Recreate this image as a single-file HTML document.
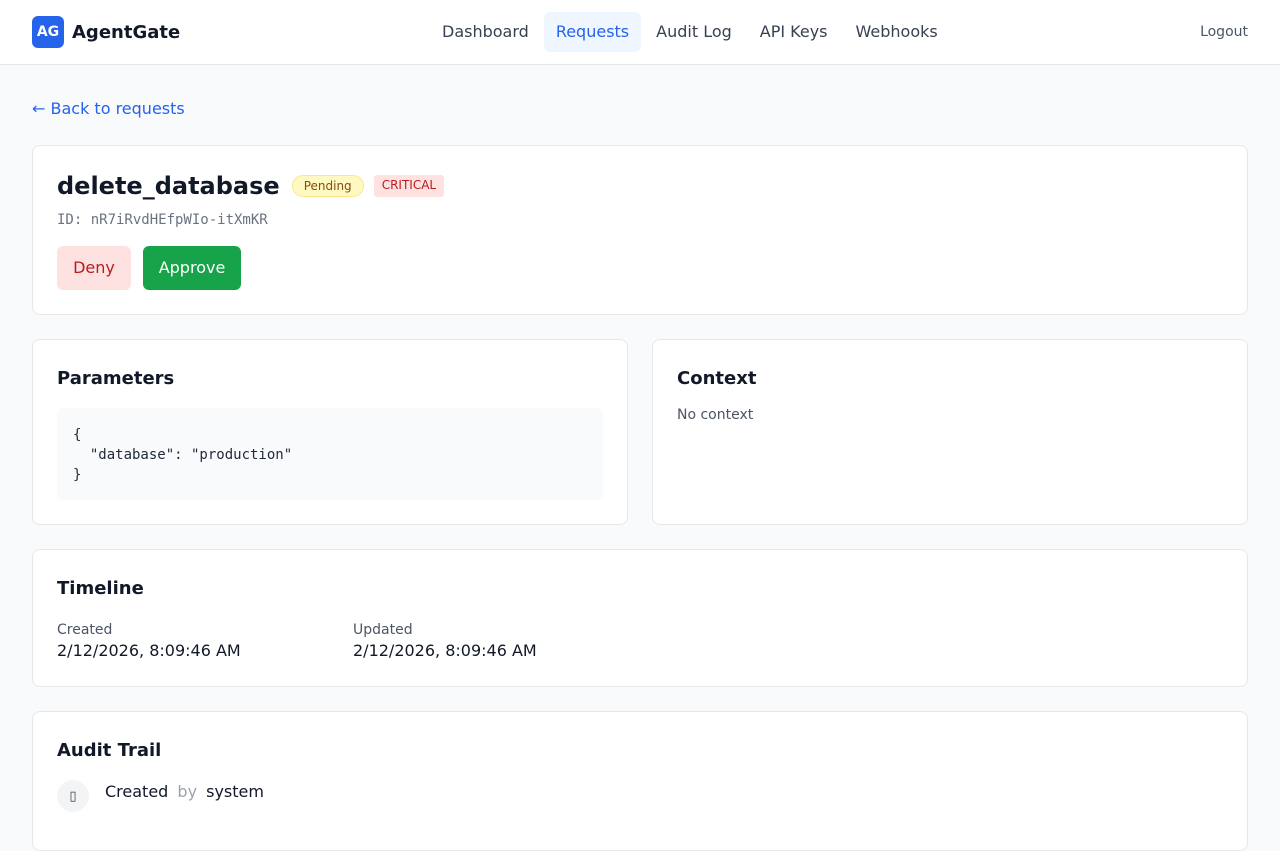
<!DOCTYPE html>
<html><head><style>
*{box-sizing:border-box;margin:0;padding:0}
body{width:1280px;height:800px;overflow:hidden;background:#f9fafb;font-family:"DejaVu Sans","Liberation Sans",sans-serif;color:#111827}
.hdr{height:65px;background:#fff;border-bottom:1px solid #e5e7eb;position:relative}
.logo{position:absolute;left:32px;top:16px;width:32px;height:32px;background:#2563eb;border-radius:6px;color:#fff;font-weight:bold;font-size:14px;line-height:32px;text-align:center}
.brand{position:absolute;left:72px;top:22px;font-weight:bold;font-size:18px}
.nav{position:absolute;top:12px;left:429px;display:flex;gap:2px}
.nav a{display:block;height:40px;line-height:40px;padding:0 13px;font-size:16px;color:#374151;border-radius:6px;text-decoration:none}
.nav a.on{background:#eff6ff;color:#2563eb;padding:0 12px}
.logout{position:absolute;right:32px;top:24px;font-size:14px;color:#4b5563}
.back{position:absolute;left:32px;top:99px;font-size:16px;color:#2563eb}
.card{position:absolute;background:#fff;border:1px solid #e5e7eb;border-radius:8px;padding:24px}
h1{font-size:24px;font-weight:bold;display:inline-block;vertical-align:middle}
.badge{display:inline-block;vertical-align:middle;font-size:12px;padding:0 11px;height:22px;line-height:21px;margin-left:10px}
h2{font-size:18px;font-weight:bold}
.mono{font-family:"DejaVu Sans Mono","Liberation Mono",monospace}
.btn{position:absolute;top:100px;height:44px;line-height:44px;border-radius:6px;font-size:16px;text-align:center}
.lbl{font-size:14px;color:#4b5563}
.val{font-size:16px;margin-top:3px}
</style></head><body>
<div class="hdr">
<div class="logo">AG</div><div class="brand">AgentGate</div>
<div class="nav"><a>Dashboard</a><a class="on">Requests</a><a>Audit Log</a><a>API Keys</a><a>Webhooks</a></div>
<div class="logout">Logout</div>
</div>
<div class="back">← Back to requests</div>
<div class="card" style="left:32px;top:145px;width:1216px;height:170px">
<div style="margin-top:2px"><h1>delete_database</h1><span class="badge" style="background:#fef9c3;border:1px solid #fde68a;border-radius:11px;color:#854d0e;margin-left:12px">Pending</span><span class="badge" style="background:#fee2e2;color:#b91c1c;border-radius:3px;padding:0 8px">CRITICAL</span></div>
<div class="mono" style="font-size:14px;color:#6b7280;margin-top:12px">ID: nR7iRvdHEfpWIo-itXmKR</div>
<div class="btn" style="left:24px;width:74px;background:#fee2e2;color:#b91c1c">Deny</div>
<div class="btn" style="left:110px;width:98px;background:#16a34a;color:#fff">Approve</div>
</div>
<div class="card" style="left:32px;top:339px;width:596px;height:186px;padding-top:28px">
<h2>Parameters</h2>
<pre class="mono" style="margin-top:19px;background:#f9fafb;border-radius:6px;padding:17px 16px 15px;font-size:14px;line-height:20px;color:#1f2937">{
  "database": "production"
}</pre>
</div>
<div class="card" style="left:652px;top:339px;width:596px;height:186px;padding-top:28px">
<h2>Context</h2>
<div style="font-size:14px;color:#4b5563;margin-top:18px">No context</div>
</div>
<div class="card" style="left:32px;top:549px;width:1216px;height:138px;padding-top:28px">
<h2>Timeline</h2>
<div style="display:flex;margin-top:23px"><div style="width:296px"><div class="lbl">Created</div><div class="val">2/12/2026, 8:09:46 AM</div></div><div><div class="lbl">Updated</div><div class="val">2/12/2026, 8:09:46 AM</div></div></div>
</div>
<div class="card" style="left:32px;top:711px;width:1216px;height:140px;padding-top:28px">
<h2>Audit Trail</h2>
<div style="position:absolute;left:24px;top:68px;width:32px;height:32px;border-radius:16px;background:#f3f4f6;text-align:center;line-height:34px;font-size:13px;color:#374151">▯</div>
<div style="position:absolute;left:72px;top:70px;font-size:16px">Created <span style="color:#9ca3af;margin:0 4px">by</span> system</div>
</div>
</body></html>
